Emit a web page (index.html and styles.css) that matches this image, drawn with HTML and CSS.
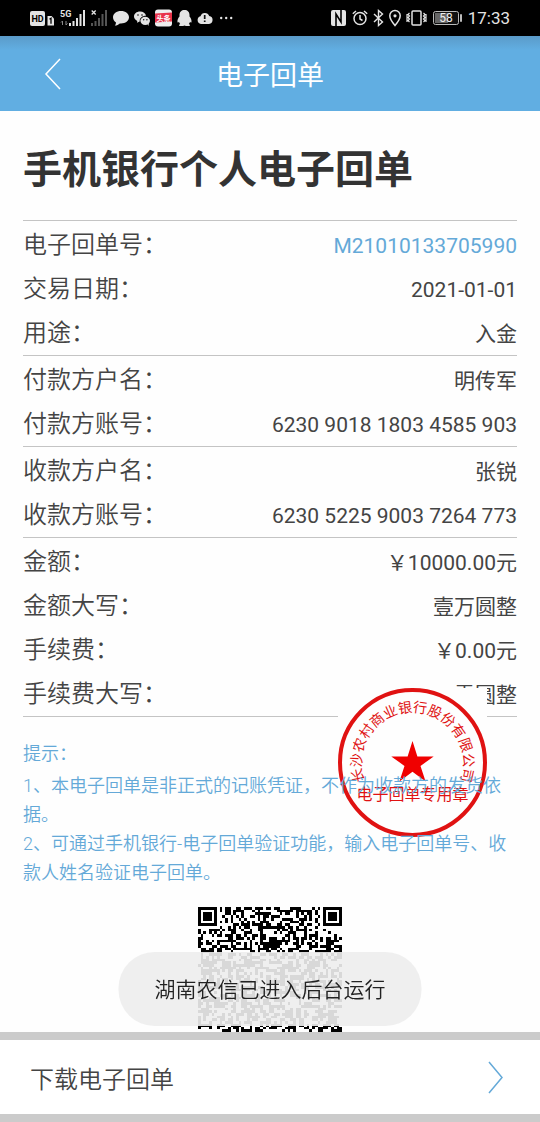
FILE: index.html
```html
<!DOCTYPE html>
<html lang="zh-CN">
<head>
  <meta charset="UTF-8">
  <meta name="viewport" content="width=device-width, initial-scale=1.0">
  <title>电子回单</title>
  <link rel="stylesheet" href="styles.css">
</head>
<body>

  <div class="status-bar">
    <div class="status-icons">
      <svg width="25" height="18" viewBox="0 0 25 18">
        <rect x="0" y="2" width="15" height="15" rx="2" fill="#e4e4e4"/>
        <text x="7.5" y="13" class="hd-text" text-anchor="middle">HD</text>
        <path d="M17.5 7h4l2.500 2.500v7h-6.500z" fill="#e4e4e4"/>
        <path d="M19.500 10.300l1.500-1v5.500" stroke="#000" stroke-width="1.300" fill="none"/>
      </svg>
      <svg width="26" height="18" viewBox="0 0 26 18">
        <text x="0" y="8" class="net-text">5G</text>
        <path d="M2.500 12v4M1 13.500l1.500-1.500M6 12v4M6 16l1.500-1.500" stroke="#888" fill="none"/>
        <path d="M9 14h2v3H9zM12.500 12h2v5h-2zM16 9h2v8h-2zM19.500 5h2v12h-2zM23 1h2v16h-2z" fill="#e4e4e4"/>
      </svg>
      <svg width="17" height="18" viewBox="0 0 17 18">
        <path d="M.7 1.500l4 4M4.700 1.500l-4 4" stroke="#e4e4e4" stroke-width="1.300"/>
        <path d="M0 14h2v3H0zM3.500 12h2v5h-2zM7 9h2v8H7zM10.500 5h2v12h-2zM14 1h2v16h-2z" fill="#555"/>
      </svg>
      <svg width="16" height="18" viewBox="0 0 16 18">
        <path d="M8 2c4.500 0 8 2.700 8 6.300s-3.500 6.200-8 6.200l-1.200-.1C5.500 15.500 4 16.400 1.800 16.500c.8-.8 1.200-1.800 1.200-3C1.200 12.300 0 10.500 0 8.300 0 4.700 3.500 2 8 2z" fill="#e4e4e4"/>
      </svg>
      <svg width="16" height="18" viewBox="0 0 16 18">
        <path d="M6 2.500c3.200 0 5.600 1.800 6 4.300-3.700 0-6.300 2.200-6.300 5v.7l-2.700 1.300.3-1.900C1.200 11 0 9.400 0 7.500c0-2.800 2.600-5 6-5z" fill="#e4e4e4"/>
        <ellipse cx="11.200" cy="11.800" rx="4.800" ry="4.100" fill="#e4e4e4"/>
        <path d="M13 14.500l1.800 2.500-.3-3z" fill="#e4e4e4"/>
        <g fill="#111"><circle cx="4" cy="6" r=".8"/><circle cx="8" cy="6" r=".8"/><circle cx="9.700" cy="10.800" r=".7"/><circle cx="12.900" cy="10.800" r=".7"/></g>
      </svg>
      <svg width="17" height="18" viewBox="0 0 17 18">
        <rect width="17" height="17" y=".5" rx="3" fill="#eee"/>
        <path d="M0 4.500l17-1v9l-17 1z" fill="#e8334a"/>
        <text x="8.500" y="11.500" class="news-text" text-anchor="middle">头条</text>
      </svg>
      <svg width="15" height="18" viewBox="0 0 15 18">
        <path d="M7.500 1C10.500 1 12.500 3 12.500 6v1.500c1.500 1.700 2.300 4 2 5.700-.6.700-1.100.2-1.500-.4-.2.900-.6 1.500-1.200 2.100 1.100.5 1.400 1 1.200 1.500-.5.900-4 .8-5.500.1-1.500.7-5 .8-5.500-.1-.2-.5.100-1 1.200-1.500-.6-.6-1-1.200-1.200-2.100-.4.600-.9 1.100-1.500.4-.3-1.700.5-4 2-5.700V6c0-3 2-5 5-5z" fill="#e4e4e4"/>
      </svg>
      <svg width="16" height="18" viewBox="0 0 16 18">
        <path d="M4 15a4 4 0 0 1-.5-7.800 4.600 4.600 0 0 1 8.700-.3A4.100 4.100 0 0 1 12 15z" fill="#e4e4e4"/>
        <path d="M7.700 6v4M7.700 11.500v1.500" stroke="#111" stroke-width="1.700"/>
      </svg>
      <svg width="16" height="18" viewBox="0 0 16 18">
        <g fill="#e4e4e4"><circle cx="3.200" cy="9" r="1.200"/><circle cx="8.200" cy="9" r="1.200"/><circle cx="13.200" cy="9" r="1.200"/></g>
      </svg>
    </div>
    <div class="status-icons">
      <svg width="17" height="18" viewBox="0 0 17 18">
        <rect x="1" y="1" width="15" height="16" rx="2" fill="#e4e4e4"/>
        <path d="M6 17V5l5 8V1" stroke="#000" stroke-width="1.600" fill="none"/>
      </svg>
      <svg width="16" height="18" viewBox="0 0 16 18" fill="none" stroke="#e4e4e4" stroke-width="1.500">
        <circle cx="8" cy="9.500" r="6"/>
        <path d="M8 6v4l2.500 1.500M.8 4.700L4 2M15.200 4.700L12 2"/>
      </svg>
      <svg width="11" height="18" viewBox="0 0 11 18" fill="none" stroke="#e4e4e4" stroke-width="1.400">
        <path d="M1 5l8.500 8L5.500 16.500v-15L9.500 5 1 13"/>
      </svg>
      <svg width="12" height="18" viewBox="0 0 12 18">
        <path d="M6 1.500a5.200 5.200 0 0 1 5.200 5.300C11.200 10.500 6 16.500 6 16.500S.8 10.500.8 6.800A5.200 5.200 0 0 1 6 1.500z" fill="none" stroke="#e4e4e4" stroke-width="1.500"/>
        <circle cx="6" cy="6.800" r="1.600" fill="#e4e4e4"/>
      </svg>
      <svg width="21" height="18" viewBox="0 0 21 18" fill="none" stroke="#e4e4e4">
        <rect x="6" y="2" width="9" height="14" rx="1" stroke-width="1.500"/>
        <path d="M3.500 4L2 5.500 3.500 7 2 8.500 3.500 10 2 11.500 3.500 13M1 5v8M17.500 4L19 5.500 17.500 7 19 8.500 17.500 10 19 11.500 17.500 13M20 5v8" stroke-width="1.200"/>
      </svg>
      <svg width="31" height="18" viewBox="0 0 31 18">
        <rect x="1.500" y="2.500" width="25" height="13" rx="2" fill="#111" stroke="#bbb"/>
        <rect x="3" y="4" width="13" height="10" fill="#666"/>
        <rect x="28" y="5" width="2" height="8" rx="1" fill="#bbb"/>
        <text x="14" y="13" class="battery-text" text-anchor="middle">58</text>
      </svg>
      <span class="clock">17:33</span>
    </div>
  </div>

  <header class="nav-bar">
    <button type="button" class="back" aria-label="返回">
      <svg width="18" height="32" viewBox="0 0 18 32"><path d="M16 1L2 16l14 15" fill="none" stroke="#fff" stroke-width="1.500"/></svg>
    </button>
    <div class="nav-title">电子回单</div>
  </header>

  <main class="receipt">
    <h1>手机银行个人电子回单</h1>

    <dl class="group">
      <div class="row"><dt>电子回单号：</dt><dd class="receipt-no">M21010133705990</dd></div>
      <div class="row"><dt>交易日期：</dt><dd>2021-01-01</dd></div>
      <div class="row"><dt>用途：</dt><dd>入金</dd></div>
    </dl>
    <dl class="group">
      <div class="row"><dt>付款方户名：</dt><dd>明传军</dd></div>
      <div class="row"><dt>付款方账号：</dt><dd>6230 9018 1803 4585 903</dd></div>
    </dl>
    <dl class="group">
      <div class="row"><dt>收款方户名：</dt><dd>张锐</dd></div>
      <div class="row"><dt>收款方账号：</dt><dd>6230 5225 9003 7264 773</dd></div>
    </dl>
    <div class="amounts">
      <dl class="group">
        <div class="row"><dt>金额：</dt><dd>￥10000.00元</dd></div>
        <div class="row"><dt>金额大写：</dt><dd>壹万圆整</dd></div>
        <div class="row"><dt>手续费：</dt><dd>￥0.00元</dd></div>
        <div class="row"><dt>手续费大写：</dt><dd>零圆整</dd></div>
      </dl>
      <svg class="seal" width="149" height="149" viewBox="0 0 149 149">
        <defs>
          <path id="seal-arc" d="M26 91A51 51 0 1 1 123 91"/>
        </defs>
        <circle cx="74.500" cy="74.500" r="72.500" fill="none" stroke="#e01212" stroke-width="4"/>
        <text class="seal-text" text-anchor="middle"><textPath href="#seal-arc" startOffset="50%">长沙农村商业银行股份有限公司</textPath></text>
        <path d="M74.500 53l4.900 15.500h16.300l-13.200 9.400 5.100 15.500-13.100-9.600-13.100 9.600 5.100-15.500-13.200-9.400h16.300z" fill="#f00000"/>
        <text class="seal-name" x="74.500" y="112" text-anchor="middle">电子回单专用章</text>
      </svg>
    </div>

    <section class="tips">
      <p class="tips-title">提示：</p>
      <p>1、本电子回单是非正式的记账凭证，不作为收款方的发货依据。</p>
      <p>2、可通过手机银行-电子回单验证功能，输入电子回单号、收款人姓名验证电子回单。</p>
    </section>

    <svg class="qrcode" id="qrcode" viewBox="0 0 53 53" shape-rendering="crispEdges" role="img" aria-label="二维码"></svg>
  </main>

  <footer class="bottom-bar">
    <button type="button" class="download">
      <span>下载电子回单</span>
      <svg width="16" height="33" viewBox="0 0 16 33"><path d="M1 1l13 15.500L1 32" fill="none" stroke="#64a9d8" stroke-width="1.500"/></svg>
    </button>
  </footer>

  <div class="toast" role="status">湖南农信已进入后台运行</div>

  <script src="script.js"></script>
</body>
</html>
```

FILE: styles.css
```css
* {
  box-sizing: border-box;
}

body {
  margin: 0;
  height: 100vh;
  display: flex;
  flex-direction: column;
  font-family: Roboto, "Noto Sans CJK SC", sans-serif;
  color: #444;
  background-color: #fefefe;
}

button {
  font-family: inherit;
  color: inherit;
  border: none;
  background: none;
  padding: 0;
  cursor: pointer;
}

svg {
  display: block;
  flex: none;
}

/* status bar */
.status-bar {
  flex: none;
  display: flex;
  justify-content: space-between;
  height: 36px;
  padding: 0 30px;
  background-color: #000;
}

.status-icons {
  display: flex;
  align-items: center;
  gap: 5px;
}

.clock {
  font-size: 17px;
  color: #e4e4e4;
}

.hd-text {
  font-size: 9px;
  font-weight: bold;
}

.net-text {
  font-size: 9px;
  font-weight: bold;
  fill: #e4e4e4;
}

.news-text {
  font-size: 7px;
  font-weight: bold;
  fill: #fff;
}

.battery-text {
  font-size: 12px;
  fill: #eee;
}

/* title bar */
.nav-bar {
  flex: none;
  position: relative;
  display: flex;
  align-items: center;
  justify-content: center;
  height: 75px;
  background: linear-gradient(#5a9bc9, #61aee2 14px);
}

.back {
  position: absolute;
  left: 44px;
}

.nav-title {
  font-size: 27px;
  color: #fff;
}

/* receipt */
.receipt {
  flex: 1;
  min-height: 0;
  overflow: hidden;
  padding: 30px 23px 0;
}

h1 {
  margin: 0 0 21px;
  font-size: 39px;
  line-height: 58px;
  color: #333;
}

.group {
  margin: 0;
  padding-top: 2px;
  border-bottom: 1px solid #c4c4c4;
}

h1 + .group {
  border-top: 1px solid #c4c4c4;
}

.row {
  display: flex;
  align-items: baseline;
  justify-content: space-between;
  height: 44px;
  line-height: 44px;
}

dt {
  font-size: 24px;
  font-weight: 350;
}

dd {
  margin: 0;
  font-size: 21px;
}

.receipt-no {
  color: #64a9d8;
}

.amounts {
  position: relative;
}

/* company seal, printed over the last row */
.seal {
  position: absolute;
  right: 30px;
  bottom: -120px;
  background-color: #fefefe;
}

.seal-text {
  font-size: 14px;
  fill: #e01212;
}

.seal-name {
  font-size: 16px;
  fill: #e01212;
}

.tips {
  position: relative;
  margin: 22px 0 20px;
  font-size: 18px;
  font-weight: 350;
  line-height: 29px;
  color: #64a9d8;
}

.tips p {
  margin: 0;
}

.tips .tips-title {
  margin-bottom: 3px;
}

.qrcode {
  width: 144px;
  height: 144px;
  margin: 0 auto;
}

/* download bar */
.bottom-bar {
  flex: none;
  border-top: 8px solid #cbcbcb;
  border-bottom: 8px solid #cbcbcb;
  background-color: #fff;
}

.download {
  display: flex;
  align-items: center;
  justify-content: space-between;
  width: 100%;
  height: 74px;
  padding: 0 36px 0 30px;
  font-size: 24px;
  font-weight: 350;
}

.toast {
  position: fixed;
  left: 50%;
  bottom: 96px;
  transform: translateX(-50%);
  padding: 2px 36px 0;
  border-radius: 36px;
  font-size: 21px;
  font-weight: 350;
  line-height: 72px;
  white-space: nowrap;
  color: #222;
  background-color: rgba(237, 237, 237, 0.91);
}
```

FILE: script.js
```js
const size = 53;
const qrcode = document.getElementById('qrcode');

// position squares in three corners
function finder(x, y) {
  const corners = [[0, 0], [size - 7, 0], [0, size - 7]];
  for (const [cx, cy] of corners) {
    const dx = x - cx;
    const dy = y - cy;
    if (dx >= -1 && dx <= 7 && dy >= -1 && dy <= 7) {
      const d = Math.max(Math.abs(dx - 3), Math.abs(dy - 3));
      return d === 3 || d <= 1;
    }
  }
  return null;
}

let seed = 20210101;
function next() {
  seed = (seed * 48271) % 2147483647;
  return seed / 2147483647;
}

let d = '';
for (let y = 0; y < size; y++) {
  for (let x = 0; x < size; x++) {
    const fixed = finder(x, y);
    const random = next() < 0.52;
    if (fixed === null ? random : fixed) {
      d += `M${x} ${y}h1v1h-1z`;
    }
  }
}

const path = document.createElementNS('http://www.w3.org/2000/svg', 'path');
path.setAttribute('d', d);
qrcode.appendChild(path);
```
